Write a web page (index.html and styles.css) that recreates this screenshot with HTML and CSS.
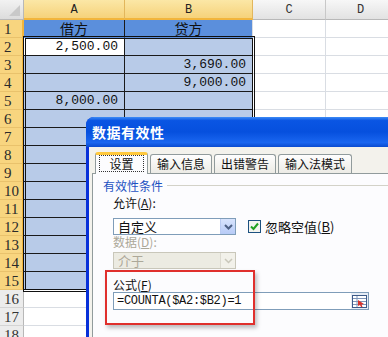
FILE: index.html
```html
<!DOCTYPE html>
<html lang="zh">
<head>
    <meta charset="UTF-8">
    <title>数据有效性</title>
    <link rel="stylesheet" href="styles.css">
</head>
<body>

<div class="screen">
    <div class="sheet">
        <div class="corner"><span class="tri"></span></div>
        <div class="ch sel">A</div><div class="ch sel">B</div><div class="ch">C</div><div class="ch">D</div>

        <div class="rh sel">1</div><div class="c s hd a">借方</div><div class="c s hd">贷方</div><div class="c"></div><div class="c"></div>
        <div class="rh sel">2</div><div class="c s a act num">2,500.00</div><div class="c s"></div><div class="c"></div><div class="c"></div>
        <div class="rh sel">3</div><div class="c s a"></div><div class="c s num">3,690.00</div><div class="c"></div><div class="c"></div>
        <div class="rh sel">4</div><div class="c s a"></div><div class="c s num">9,000.00</div><div class="c"></div><div class="c"></div>
        <div class="rh sel">5</div><div class="c s a num">8,000.00</div><div class="c s"></div><div class="c"></div><div class="c"></div>
        <div class="rh sel">6</div><div class="c s a"></div><div class="c s"></div><div class="c"></div><div class="c"></div>
        <div class="rh sel">7</div><div class="c s a"></div><div class="c s"></div><div class="c"></div><div class="c"></div>
        <div class="rh sel">8</div><div class="c s a"></div><div class="c s"></div><div class="c"></div><div class="c"></div>
        <div class="rh sel">9</div><div class="c s a"></div><div class="c s"></div><div class="c"></div><div class="c"></div>
        <div class="rh sel">10</div><div class="c s a"></div><div class="c s"></div><div class="c"></div><div class="c"></div>
        <div class="rh sel">11</div><div class="c s a"></div><div class="c s"></div><div class="c"></div><div class="c"></div>
        <div class="rh sel">12</div><div class="c s a"></div><div class="c s"></div><div class="c"></div><div class="c"></div>
        <div class="rh sel">13</div><div class="c s a"></div><div class="c s"></div><div class="c"></div><div class="c"></div>
        <div class="rh sel">14</div><div class="c s a"></div><div class="c s"></div><div class="c"></div><div class="c"></div>
        <div class="rh sel">15</div><div class="c s a"></div><div class="c s"></div><div class="c"></div><div class="c"></div>
        <div class="rh">16</div><div class="c"></div><div class="c"></div><div class="c"></div><div class="c"></div>
        <div class="rh">17</div><div class="c"></div><div class="c"></div><div class="c"></div><div class="c"></div>
        <div class="rh">18</div><div class="c"></div><div class="c"></div><div class="c"></div><div class="c"></div>
    </div>

    <!-- copy marquee around A2:B15 -->
    <div class="marquee"></div>

    <div class="dialog">
        <div class="titlebar">数据有效性</div>
        <div class="dlg-body">
            <div class="tabs">
                <div class="tab active"><span class="focus">设置</span></div>
                <div class="tab">输入信息</div>
                <div class="tab">出错警告</div>
                <div class="tab">输入法模式</div>
            </div>
            <div class="panel">
                <div class="group-title"><span>有效性条件</span></div>

                <div class="lbl">允许(<u>A</u>):</div>
                <div class="line">
                    <div class="select">
                        <span class="val">自定义</span>
                        <span class="drop">
                            <svg width="9" height="6" viewBox="0 0 9 6"><path d="M1 1 L4.5 4.5 L8 1" fill="none" stroke="#4d6185" stroke-width="2"/></svg>
                        </span>
                    </div>
                    <div class="check">
                        <span class="box">
                            <svg width="9" height="9" viewBox="0 0 9 9"><path d="M1 4.5 L3.5 7 L8 1.5" fill="none" stroke="#21a121" stroke-width="2"/></svg>
                        </span>
                        忽略空值(<u>B</u>)
                    </div>
                </div>

                <div class="lbl off">数据(<u>D</u>):</div>
                <div class="select disabled">
                    <span class="val">介于</span>
                    <span class="drop">
                        <svg width="9" height="6" viewBox="0 0 9 6"><path d="M1 1 L4.5 4.5 L8 1" fill="none" stroke="#c9c7ba" stroke-width="1.5"/></svg>
                    </span>
                </div>

                <div class="lbl formula-lbl">公式(<u>F</u>)</div>
                <div class="formula">
                    <span>=COUNTA($A2:$B2)=1</span>
                    <span class="refbtn">
                        <svg width="15" height="13" viewBox="0 0 15 13">
                            <rect x="0.5" y="0.5" width="14" height="12" fill="#fff" stroke="#3d5a88"/>
                            <path d="M1 3.5 H14 M1 6.5 H14 M1 9.5 H14 M5 1 V12" stroke="#7f95b8" stroke-width="1"/>
                            <path d="M6 5 L12 9 L9.5 9.5 L10.5 12 L9 12 L8 10 L6 11 Z" fill="#d8322b"/>
                        </svg>
                    </span>
                </div>
            </div>
        </div>
    </div>

    <div class="mark"></div>
</div>

</body>
</html>
```

FILE: styles.css
```css
body {
    margin: 0;
    font-family: "Liberation Sans", "Noto Sans CJK SC", sans-serif;
}
.screen {
    position: relative;
    width: 388px;
    height: 337px;
    overflow: hidden;
    background: #fff;
}

/* spreadsheet */
.sheet {
    display: grid;
    grid-template-columns: 24px 101px 128px 73px 70px;
    grid-template-rows: 20px;
    grid-auto-rows: 18px;
}
.sheet > div {
    box-sizing: border-box;
}
.corner {
    background: linear-gradient(#f2f2f2, #dcdcdc);
    border-right: 1px solid #b8b8b8;
    border-bottom: 1px solid #b8b8b8;
    position: relative;
}
.tri {
    position: absolute;
    right: 3px;
    bottom: 3px;
    border-left: 11px solid transparent;
    border-bottom: 11px solid #c9c9c9;
}
.ch {
    background: linear-gradient(#f7f7f7, #e2e2e2);
    border-right: 1px solid #c8c8c8;
    border-bottom: 1px solid #b8b8b8;
    text-align: center;
    font: 12px/20px "Liberation Mono", monospace;
    color: #333;
}
.ch.sel {
    background: linear-gradient(#fbe7a6, #f6d27a);
    border-right-color: #e2b65c;
    border-bottom: 2px solid #f2b53c;
    color: #222;
}
.rh {
    background: #ececec;
    border-right: 1px solid #b8b8b8;
    border-bottom: 1px solid #d4d4d4;
    font: 15px/18px "Liberation Serif", serif;
    color: #333;
    padding-left: 4px;
}
.rh.sel {
    background: #f8d57f;
    border-right: 2px solid #f2b53c;
    border-bottom-color: #e9c26c;
    color: #2a2a2a;
}
.c {
    border-right: 1px solid #d9dde3;
    border-bottom: 1px solid #d9dde3;
    font: 13px/18px "Liberation Mono", monospace;
    color: #111;
    padding: 0 6px;
}
.c.s {
    background: #b8cbe8;
    border-bottom: 1px solid #1a1a1a;
}
.c.s.a {
    border-right: 1px solid #1a1a1a;
}
.c.hd {
    background: #5b8fdc;
    border-bottom: 1px solid #5b8fdc;
    text-align: center;
    font-family: "Noto Sans CJK SC", sans-serif;
    font-size: 14px;
    line-height: 17px;
}
.c.act {
    background: #fff;
}
.num {
    text-align: right;
}
.marquee {
    position: absolute;
    left: 23px;
    top: 36px;
    width: 232px;
    height: 256px;
    border: 3px double #111;
    box-sizing: border-box;
}

/* dialog */
.dialog {
    position: absolute;
    left: 86px;
    top: 117px;
    width: 320px;
    height: 240px;
    background: #0831d9;
    border-radius: 8px 8px 0 0;
    padding: 0 0 0 3px;
    box-sizing: border-box;
    font-family: "Noto Sans CJK SC", sans-serif;
    font-size: 12px;
    color: #111;
}
.titlebar {
    height: 30px;
    margin-left: -3px;
    padding-left: 6px;
    border-radius: 8px 8px 0 0;
    background: linear-gradient(#3d8cf5, #0a55e3 12%, #0650de 50%, #1a66f0 85%, #0a4bd0);
    color: #fff;
    font-weight: bold;
    font-size: 14px;
    line-height: 30px;
    letter-spacing: 0.5px;
}
.dlg-body {
    background: #f3f2ec;
    height: 210px;
    padding: 5px 0 0 3px;
}
.tabs {
    display: flex;
    height: 21px;
    margin-left: 3px;
    align-items: flex-end;
    position: relative;
    z-index: 1;
}
.tab {
    height: 19px;
    box-sizing: border-box;
    padding: 0 6px;
    margin-right: 2px;
    border: 1px solid #919b9c;
    border-bottom: none;
    border-radius: 3px 3px 0 0;
    background: linear-gradient(#fefefe, #ecebe5);
    line-height: 18px;
    font-size: 12px;
}
.tab.active {
    height: 22px;
    width: 53px;
    margin-bottom: -1px;
    border-top: 3px solid #ffc83c;
    background: #fcfcfe;
    line-height: 18px;
    padding: 0 3px;
}
.focus {
    display: block;
    border: 1px dotted #333;
    line-height: 15px;
    text-align: center;
}
.panel {
    background: #fcfcfe;
    border: 1px solid #919b9c;
    border-right: none;
    height: 200px;
    padding: 4px 0 0 10px;
}
.group-title {
    display: flex;
    align-items: center;
    color: #1d52c2;
    height: 15px;
    line-height: 15px;
}
.group-title::after {
    content: "";
    flex: 1;
    border-top: 1px solid #d3d2c8;
    margin-left: 4px;
}
.lbl {
    margin: 3px 0 0 10px;
    height: 14px;
    line-height: 14px;
}
.lbl u {
    text-decoration: underline;
}
.lbl.off {
    color: #aca899;
    margin-top: 0;
}
.line {
    display: flex;
    align-items: center;
    height: 17px;
    margin: 8px 0 0 10px;
}
.select {
    display: flex;
    width: 123px;
    height: 17px;
    box-sizing: border-box;
    border: 1px solid #7f9db9;
    background: #fff;
    align-items: center;
    justify-content: space-between;
    padding-left: 4px;
}
.select .val {
    font-size: 13px;
    line-height: 15px;
}
.drop {
    width: 14px;
    height: 15px;
    background: linear-gradient(#d8e4fd, #b7cbf7);
    border-left: 1px solid #b9cbf2;
    display: flex;
    align-items: center;
    justify-content: center;
}
.select.disabled {
    margin: 3px 0 0 10px;
    border-color: #c9c7ba;
    background: #ecebe2;
    color: #aca899;
}
.select.disabled .drop {
    background: #f2f1ea;
    border-left-color: #dcdad0;
}
.check {
    display: flex;
    align-items: center;
    margin-left: 12px;
    font-size: 13px;
    line-height: 15px;
}
.box {
    width: 13px;
    height: 13px;
    box-sizing: border-box;
    border: 1px solid #1c5180;
    background: #f4f4ef;
    display: flex;
    align-items: center;
    justify-content: center;
    margin-right: 4px;
}
.formula-lbl {
    margin-top: 9px;
}
.formula {
    display: flex;
    align-items: center;
    justify-content: space-between;
    margin-left: 10px;
    width: 256px;
    height: 18px;
    box-sizing: border-box;
    border: 1px solid #7f9db9;
    background: #fff;
    padding-left: 3px;
    font: 12px/16px "Liberation Mono", monospace;
    letter-spacing: -0.3px;
}
.refbtn {
    width: 17px;
    height: 16px;
    display: flex;
    align-items: center;
    justify-content: center;
    background: #e6ecf5;
}

/* red annotation box */
.mark {
    position: absolute;
    left: 105px;
    top: 270px;
    width: 150px;
    height: 55px;
    box-sizing: border-box;
    border: 2px solid #e0302d;
    box-shadow: 2px 3px 4px rgba(0, 0, 0, 0.25);
}
```
